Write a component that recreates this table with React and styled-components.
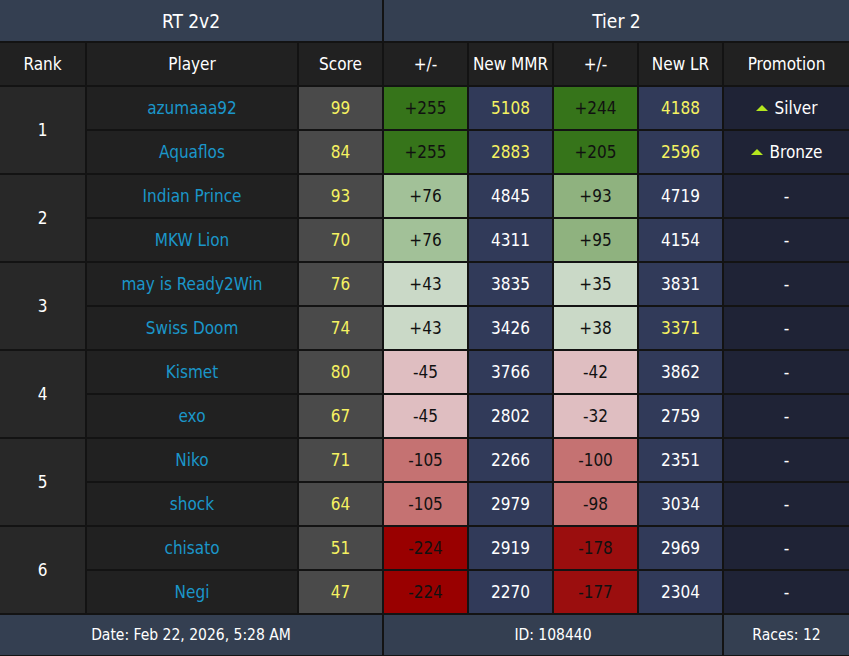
import React from "react";
import styled, { createGlobalStyle } from "styled-components";

const GlobalStyle = createGlobalStyle`
  body {
    margin: 0;
    background: #141414;
    font-family: "DejaVu Sans Condensed", "Liberation Sans", sans-serif;
  }
`;

const Board = styled.div`
  display: grid;
  grid-template-columns: 85px 210px 83px 83px 83px 83px 83px 1fr;
  grid-template-rows: 41px 42px repeat(12, 42px) 40px;
  gap: 2px;
  width: 849px;
  background: #131313;
  color: #fff;
  font-size: 17px;
`;

const Cell = styled.div`
  display: flex;
  align-items: center;
  justify-content: center;
  gap: 7px;
  background: ${(p) => p.$bg || "#212121"};
  color: ${(p) => p.$color || "#fff"};
  grid-column: ${(p) => (p.$span ? `span ${p.$span}` : "auto")};
  grid-row: ${(p) => (p.$rows ? `span ${p.$rows}` : "auto")};
  white-space: nowrap;
`;

const Title = styled(Cell)`
  background: #343f51;
  font-size: 19px;
`;

const Head = styled(Cell)`
  background: #212121;
  font-size: 17px;
`;

const Footer = styled(Cell)`
  background: #343f51;
  font-size: 15.5px;
`;

const Up = styled.span`
  width: 0;
  height: 0;
  border-left: 6px solid transparent;
  border-right: 6px solid transparent;
  border-bottom: 6px solid #b4e61e;
`;

const YELLOW = "#f6f261";

const deltaBg = (v, second) => {
  if (v >= 200) return "#36741a";
  if (v >= 60) return second ? "#8fb27f" : "#a2c198";
  if (v > 0) return "#cad9c7";
  if (v > -60) return "#dfbec1";
  if (v > -150) return "#c57272";
  return second ? "#9b0e0e" : "#990000";
};

const groups = [
  {
    rank: 1,
    players: [
      { name: "azumaaa92", score: 99, d1: 255, mmr: 5108, d2: 244, lr: 4188, mmrY: true, lrY: true, promo: "Silver" },
      { name: "Aquaflos", score: 84, d1: 255, mmr: 2883, d2: 205, lr: 2596, mmrY: true, lrY: true, promo: "Bronze" },
    ],
  },
  {
    rank: 2,
    players: [
      { name: "Indian Prince", score: 93, d1: 76, mmr: 4845, d2: 93, lr: 4719 },
      { name: "MKW Lion", score: 70, d1: 76, mmr: 4311, d2: 95, lr: 4154 },
    ],
  },
  {
    rank: 3,
    players: [
      { name: "may is Ready2Win", score: 76, d1: 43, mmr: 3835, d2: 35, lr: 3831 },
      { name: "Swiss Doom", score: 74, d1: 43, mmr: 3426, d2: 38, lr: 3371, lrY: true },
    ],
  },
  {
    rank: 4,
    players: [
      { name: "Kismet", score: 80, d1: -45, mmr: 3766, d2: -42, lr: 3862 },
      { name: "exo", score: 67, d1: -45, mmr: 2802, d2: -32, lr: 2759 },
    ],
  },
  {
    rank: 5,
    players: [
      { name: "Niko", score: 71, d1: -105, mmr: 2266, d2: -100, lr: 2351 },
      { name: "shock", score: 64, d1: -105, mmr: 2979, d2: -98, lr: 3034 },
    ],
  },
  {
    rank: 6,
    players: [
      { name: "chisato", score: 51, d1: -224, mmr: 2919, d2: -178, lr: 2969 },
      { name: "Negi", score: 47, d1: -224, mmr: 2270, d2: -177, lr: 2304 },
    ],
  },
];

const fmt = (v) => (v > 0 ? `+${v}` : `${v}`);

const PlayerRow = ({ p }) => (
  <>
    <Cell $color="#1b96c9">{p.name}</Cell>
    <Cell $bg="#4a4a4a" $color={YELLOW}>{p.score}</Cell>
    <Cell $bg={deltaBg(p.d1, false)} $color="#111">{fmt(p.d1)}</Cell>
    <Cell $bg="#313a59" $color={p.mmrY ? YELLOW : "#fff"}>{p.mmr}</Cell>
    <Cell $bg={deltaBg(p.d2, true)} $color="#111">{fmt(p.d2)}</Cell>
    <Cell $bg="#313a59" $color={p.lrY ? YELLOW : "#fff"}>{p.lr}</Cell>
    <Cell $bg="#1f2336">
      {p.promo ? (
        <>
          <Up />
          {p.promo}
        </>
      ) : (
        "-"
      )}
    </Cell>
  </>
);

export default function App() {
  return (
    <>
      <GlobalStyle />
      <Board>
        <Title $span={3}>RT 2v2</Title>
        <Title $span={5}>Tier 2</Title>

        <Head>Rank</Head>
        <Head>Player</Head>
        <Head>Score</Head>
        <Head>+/-</Head>
        <Head>New MMR</Head>
        <Head>+/-</Head>
        <Head>New LR</Head>
        <Head>Promotion</Head>

        {groups.map((g) => (
          <React.Fragment key={g.rank}>
            <Cell $bg="#282828" $rows={2}>{g.rank}</Cell>
            <PlayerRow p={g.players[0]} />
            <PlayerRow p={g.players[1]} />
          </React.Fragment>
        ))}

        <Footer $span={3}>Date: Feb 22, 2026, 5:28 AM</Footer>
        <Footer $span={4}>ID: 108440</Footer>
        <Footer>Races: 12</Footer>
      </Board>
    </>
  );
}
